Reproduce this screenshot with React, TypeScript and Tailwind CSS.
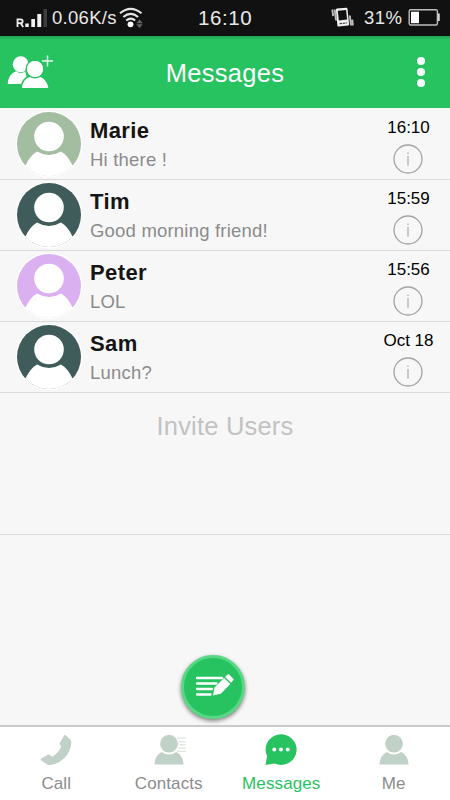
import React from "react";

interface Chat {
    name: string;
    message: string;
    time: string;
    color: string;
}

const chats: Chat[] = [
    { name: "Marie", message: "Hi there !", time: "16:10", color: "#a2bd9f" },
    { name: "Tim", message: "Good morning friend!", time: "15:59", color: "#3f5c5a" },
    { name: "Peter", message: "LOL", time: "15:56", color: "#dbb0f0" },
    { name: "Sam", message: "Lunch?", time: "Oct 18", color: "#3f5c5a" },
];

const StatusBar = () => (
    <div className="flex h-9 shrink-0 items-center bg-[#111111] text-[#e8e8e8]">
        <svg className="h-9 w-[52px]" viewBox="0 0 52 36">
            <path d="M17.500 27V19.300h3.200a1.900 1.900 0 0 1 0 3.900h-3M20.500 23l2.700 4" fill="none" stroke="#eee" strokeWidth="1.800" />
            <path d="M25.300 23.500h3.400v3.500h-3.400zM31.300 19h3.700v8h-3.700zM37.300 14h3.900v13h-3.900z" fill="#f2f2f2" />
            <path d="M43.500 9H47v18h-3.500z" fill="#3c3c3c" />
        </svg>
        <span className="w-[67px] whitespace-nowrap text-[18.500px] tracking-[0.300px]">0.06K/s</span>
        <svg className="h-9 w-[26px]" viewBox="119 0 26 36">
            <g fill="none" stroke="#e4e4e4" strokeWidth="2.100">
                <path d="M120 13.300q10.700-9 21.500 0" />
                <path d="M123.300 17q7.400-6.300 14.800 0" />
                <path d="M126.200 20.500q4.500-3.800 9 0" />
            </g>
            <circle cx="130.500" cy="24.300" r="2.900" fill="#fff" />
            <path d="M139.500 19.500l3.300 3.700h-6.600zM136.200 24.300h6.600l-3.300 3.700z" fill="#666" />
        </svg>
        <span className="ml-[53px] text-[20.500px] tracking-[0.600px]">16:10</span>
        <div className="ml-auto flex items-center">
            <svg className="h-9 w-[24px]" viewBox="330 0 24 36">
                <path d="M332.300 9.500l.9 6.500M334.700 9.500l1.300 11" stroke="#bbb" strokeWidth="1.900" />
                <path d="M349.800 15.500l1.200 10M352.300 19.500l.6 6" stroke="#bbb" strokeWidth="1.900" />
                <path d="M335.900 9.800q-.1-1 .9-1.200l9.500-.8q1-.1 1.200.9l1.600 15.600q.1 1-.9 1.100l-9.600 1.200q-1 .1-1.200-.9z" fill="#f1f1f1" />
                <path d="M337.800 10.700l8.300-.8 1 9.500-8.300 1z" fill="#111" />
                <path d="M339.700 23.700l7.500-.9" stroke="#444" strokeWidth="1.200" strokeDasharray="2.500 .8" />
            </svg>
            <span className="ml-[10px] w-[44px] text-[18.500px] tracking-[0.500px]">31%</span>
            <svg className="h-9 w-[42px]" viewBox="408 0 42 36">
                <rect x="409.200" y="9.800" width="28.200" height="15.200" rx="1.500" fill="none" stroke="#bdbdbd" strokeWidth="1.400" />
                <path d="M411 11.700h8v11.500h-8z" fill="#fff" />
                <path d="M438 13.500h1.700v7.500H438z" fill="#ddd" />
            </svg>
        </div>
    </div>
);

const Header = () => (
    <header className="grid h-[72px] shrink-0 grid-cols-[1fr_auto_1fr] items-center bg-[#27c361] text-white shadow-[inset_0_3px_2px_-1px_rgba(0,0,0,0.15)]">
        <svg className="h-[72px] w-[56px]" viewBox="0 36 56 72" fill="#fff">
            <circle cx="20.700" cy="64.300" r="8" />
            <path d="M7.700 84q.4-9.500 8.300-12.700 4.500 3.200 9.300.2l3 12.500z" />
            <circle cx="35" cy="69" r="8.800" stroke="#27c361" strokeWidth="1.600" />
            <path d="M21 88.800q.6-9.800 8.700-12.700 5.300 3.300 10.600 0 7.600 3.100 9 12.700z" stroke="#27c361" strokeWidth="1.600" />
            <circle cx="35" cy="69" r="8" />
            <path d="M42 61h11M47.500 55.500v11" stroke="#e9f9ef" strokeWidth="1.500" />
        </svg>
        <h1 className="pt-[3px] text-[25.500px] tracking-[0.300px]">Messages</h1>
        <div className="mr-[25px] flex flex-col gap-[2.600px] justify-self-end">
            <span className="size-[8.200px] rounded-full bg-white" />
            <span className="size-[8.200px] rounded-full bg-white" />
            <span className="size-[8.200px] rounded-full bg-white" />
        </div>
    </header>
);

const Avatar = ({ color }: { color: string }) => (
    <svg className="size-[68px]" viewBox="0 0 68 68">
        <circle cx="34" cy="34" r="33.200" fill="#fff" />
        <circle cx="34" cy="34" r="32" fill={color} />
        <path d="M10.500 55.500Q15 45.500 22 41.500Q34 48.500 46 41.500Q53 45.500 57.500 55.500A33.200 33.200 0 0 1 10.500 55.500Z" fill="#fff" />
        <path d="M10.500 55.500L57.500 55.500A32.500 32.500 0 0 1 10.500 55.500Z" fill="#fff" stroke="#fff" />
        <circle cx="34" cy="26.500" r="14.800" fill="#fff" />
    </svg>
);

const InfoIcon = () => (
    <svg className="size-[30px]" viewBox="0 0 30 30">
        <circle cx="15" cy="15" r="14" fill="none" stroke="#a3a3a3" strokeWidth="1.300" />
        <path d="M15 12v9.700M15 8.500v1.500" stroke="#ababab" strokeWidth="1.200" />
    </svg>
);

const ChatRow = ({ chat }: { chat: Chat }) => (
    <li className="flex h-[71px] border-b border-[#dadada] first:h-[72px] first:pt-px">
        <div className="ml-[15px] w-[75px] pt-px">
            <Avatar color={chat.color} />
        </div>
        <div className="flex-1 pt-[8px]">
            <p className="text-[22px] leading-[27px] font-bold tracking-[0.400px] text-[#151515]">{chat.name}</p>
            <p className="mt-[4px] text-[18.500px] leading-[24px] tracking-[0.200px] text-[#8b8b8b]">{chat.message}</p>
        </div>
        <div className="mr-[11px] flex w-[61px] flex-col items-center pt-[9px]">
            <span className="text-[17px] leading-5 text-black">{chat.time}</span>
            <div className="mt-[6px] mr-[2px]">
                <InfoIcon />
            </div>
        </div>
    </li>
);

const PersonShape = () => (
    <>
        <circle cx="16.500" cy="10" r="9.200" />
        <path d="M1.500 31.500Q2 22 9 18.500Q16.500 23.800 24 18.500Q31 22 31.500 31.500Z" />
    </>
);

const tabs = [
    {
        label: "Call",
        icon: <path d="M25 1.300Q26 .8 27 1.700L31.300 5.600Q32.500 6.900 32.300 9Q31.600 18.300 25.200 24.700Q18.500 31.300 10 32Q8 32.200 7 31.300L1 27Q.2 26 1.300 25.300L8 21.300Q9 20.700 9.800 21.500L12.500 23.500Q19 19.300 22 12.800L20.500 10.800Q20 9.900 20.600 9Z" />,
    },
    {
        label: "Contacts",
        icon: (
            <>
                <PersonShape />
                <path d="M25 4.300h9M26.500 7.800h7M26.500 11.200h7M26 14.500h7.500M24.500 18h9.500" stroke="#dce6df" strokeWidth="1.200" />
            </>
        ),
    },
    {
        label: "Messages",
        active: true,
        icon: (
            <>
                <path d="M.5 32L2.200 23A16 15.800 0 1 1 10 30.500Z" />
                <circle cx="9.500" cy="16" r="2" fill="#fff" />
                <circle cx="16.500" cy="16" r="2" fill="#fff" />
                <circle cx="23.500" cy="16" r="2" fill="#fff" />
            </>
        ),
    },
    { label: "Me", icon: <PersonShape /> },
];

const TabBar = () => (
    <nav className="grid h-[75px] shrink-0 grid-cols-4 border-t-2 border-[#cacaca] bg-white">
        {tabs.map((tab) => (
            <div key={tab.label} className={tab.active ? "flex flex-col items-center pt-[7px] text-[#27c361]" : "flex flex-col items-center pt-[7px] text-[#8c8c8c]"}>
                <svg className={tab.active ? "size-8 overflow-visible fill-[#27c361]" : "size-8 overflow-visible fill-[#c0d1c8]"} viewBox="0 0 33 33">
                    {tab.icon}
                </svg>
                <span className="mt-[8px] text-[17px] leading-5 tracking-[0.100px]">{tab.label}</span>
            </div>
        ))}
    </nav>
);

const App: React.FC = () => {
    return (
        <div className="flex h-[800px] w-[450px] flex-col overflow-hidden bg-[#f7f7f7] font-['Liberation_Sans',Arial,sans-serif]">
            <StatusBar />
            <Header />
            <ul>
                {chats.map((chat) => (
                    <ChatRow key={chat.name} chat={chat} />
                ))}
            </ul>
            <div className="h-[142px] border-b border-[#dadada] pt-[17px] text-center text-[25.500px] leading-8 tracking-[0.200px] text-[#c2c2c2]">
                Invite Users
            </div>
            <div className="flex flex-1 items-end justify-center pr-[24px] pb-[6px]">
                <button className="size-[64px] rounded-full border-[3px] border-[#58d885] bg-[#27c361] shadow-[0_2px_4px_rgba(0,0,0,0.5)]">
                    <svg className="size-full" viewBox="0 0 58 58">
                        <path d="M13 20h25M13 25.500h19.500M13 31h15M13 36.500h13.500" stroke="#fff" strokeWidth="2.300" strokeLinecap="round" />
                        <path d="M29 37.500l1.500-8L40 20l6.300 6-9.500 9.700zM41 19l2.500-2.500q.8-.7 1.600 0l4.200 4.200q.7.8 0 1.500l-2.200 2.500z" fill="#fff" />
                    </svg>
                </button>
            </div>
            <TabBar />
        </div>
    );
};

export default App;
